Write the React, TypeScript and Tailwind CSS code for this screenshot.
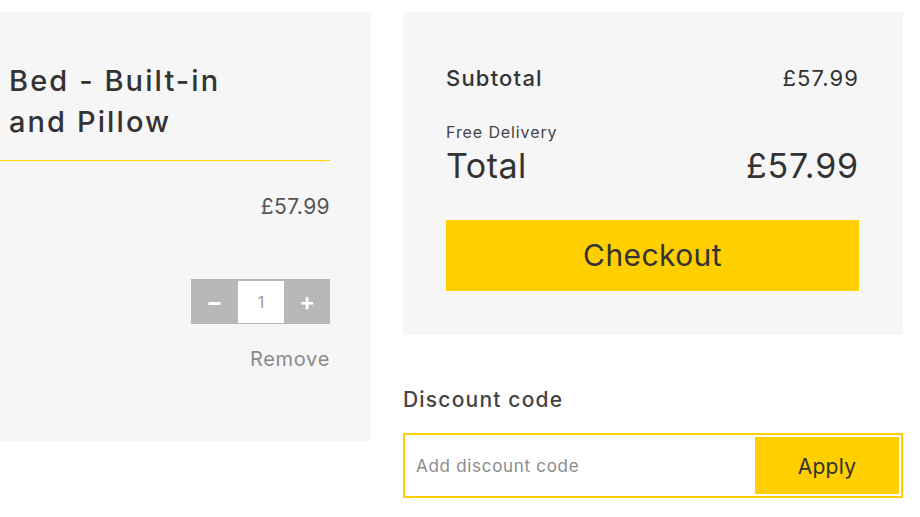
import { useState } from "react";

export default function App() {
  const [qty, setQty] = useState(1);
  const [code, setCode] = useState("");

  return (
    <div className="min-h-[517px] w-[920px] overflow-hidden bg-white pt-3 font-['Inter',sans-serif]">
      <div className="flex items-start gap-8">
        {/* basket item */}
        <div className="h-[429px] w-[371px] bg-[#f6f6f6] pr-[41px]">
          <h2 className="pl-[9px] pt-[48px] text-[29px] leading-[41px] font-medium tracking-[2.1px] text-[#333]">
            Bed - Built-in
            <br />
            and Pillow
          </h2>
          <div className="mt-[18px] h-[1px] bg-[#ffd000]" />
          <p className="mt-[34px] text-right text-[21px] leading-6 tracking-[0.4px] text-[#555]">£57.99</p>
          <div className="mt-[60px] flex justify-end">
            <div className="flex h-[45px] w-[139px] items-center bg-[#b8b8b8]">
              <button
                className="h-full w-[47px] text-[24px] font-bold text-white"
                onClick={() => setQty((q) => Math.max(1, q - 1))}
              >
                −
              </button>
              <input
                value={qty}
                readOnly
                className="h-[42px] w-[46px] bg-white text-center text-[16px] text-[#9a9a9a] outline-none"
              />
              <button
                className="h-full w-[46px] text-[24px] font-semibold text-white"
                onClick={() => setQty((q) => q + 1)}
              >
                +
              </button>
            </div>
          </div>
          <p className="mt-[23px] text-right text-[20px] leading-6 tracking-[0.7px] text-[#8a8a8a]">Remove</p>
        </div>

        {/* summary */}
        <div className="w-[500px]">
          <div className="h-[323px] bg-[#f6f6f6] pl-[43px] pr-[44px] pt-[52px]">
            <div className="flex items-center justify-between text-[#333]">
              <span className="text-[22px] leading-7 font-medium tracking-[1.2px]">Subtotal</span>
              <span className="text-[22px] leading-7 tracking-[1.1px]">£57.99</span>
            </div>
            <p className="mt-[30px] text-[16px] leading-5 tracking-[0.9px] text-[#444]">Free Delivery</p>
            <div className="mt-[3px] flex items-center justify-between text-[#333]">
              <span className="text-[34px] leading-[42px] tracking-[0.5px]">Total</span>
              <span className="text-[34px] leading-[42px] tracking-[0.8px]">£57.99</span>
            </div>
            <button className="mt-[33px] h-[71px] w-full bg-[#ffcf00] text-[30px] tracking-[0.4px] text-[#333]">
              Checkout
            </button>
          </div>

          <p className="mt-[51px] text-[21px] leading-7 font-medium tracking-[1.2px] text-[#444]">Discount code</p>
          <div className="mt-[19px] flex h-[65px] border-2 border-[#ffcf00] bg-white p-[2px]">
            <input
              value={code}
              onChange={(e) => setCode(e.target.value)}
              placeholder="Add discount code"
              className="min-w-0 flex-1 bg-white pl-[9px] pt-[3px] text-[17px] tracking-[0.7px] text-[#333] placeholder:text-[#8c8c8c] outline-none"
            />
            <button className="w-[144px] bg-[#ffcf00] pt-[2px] text-[21px] tracking-[0.3px] text-[#333]">Apply</button>
          </div>
        </div>
      </div>
    </div>
  );
}
